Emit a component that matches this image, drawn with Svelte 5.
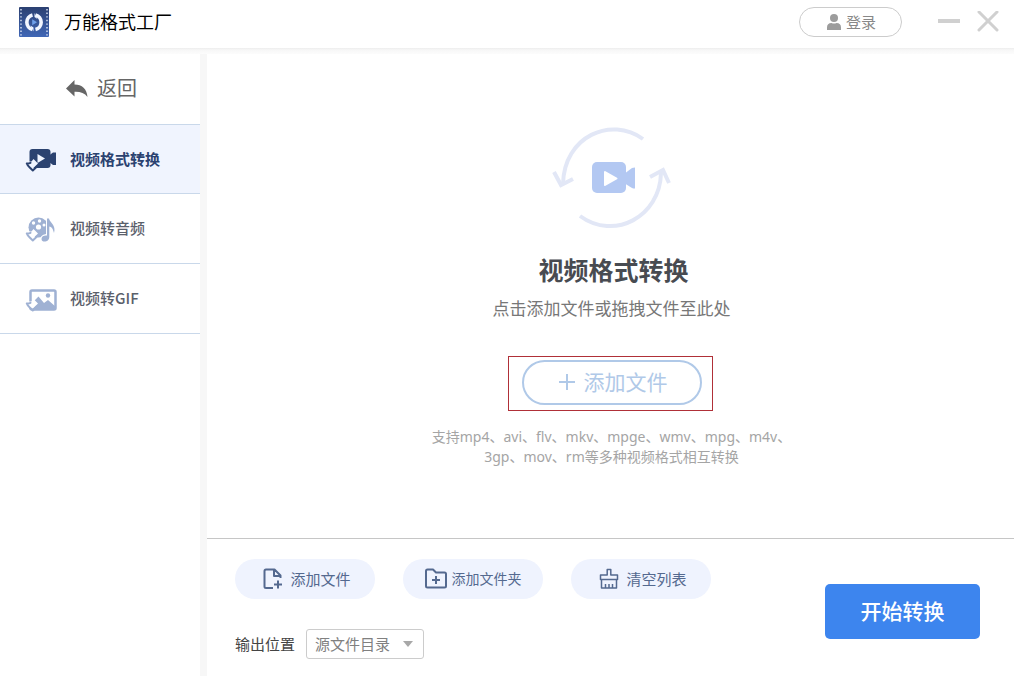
<script>
  const modes = [
    { id: 'convert', label: '视频格式转换' },
    { id: 'audio', label: '视频转音频' },
    { id: 'gif', label: '视频转GIF' }
  ];
  const actions = [
    { id: 'file', label: '添加文件' },
    { id: 'folder', label: '添加文件夹' },
    { id: 'clear', label: '清空列表' }
  ];
  let current = $state('convert');
  let output = $state('source');
</script>

<div class="app">
  <header>
    <svg class="logo" viewBox="0 0 30 30" aria-hidden="true">
      <defs>
        <linearGradient id="logo-fill" x1="0" y1="0" x2="0" y2="1">
          <stop offset="0" stop-color="#2b4071" />
          <stop offset="1" stop-color="#4067b6" />
        </linearGradient>
      </defs>
      <rect width="30" height="30" rx="1" fill="url(#logo-fill)" />
      <path d="M2 2V29M28 2V29" stroke="#dfe7f7" stroke-width="1.4" stroke-dasharray="1.4 2.2" />
      <path d="M13.500 7.900A7.600 7.600 0 0 0 13.500 22.600M16.500 22.600A7.600 7.600 0 0 0 16.500 7.900" fill="none" stroke="#f2f6ff" stroke-width="3.6" />
      <path d="M11.500 18.500L14.500 20.500V24.500ZM18.500 12L15.500 10V6Z" fill="#f2f6ff" />
      <path d="M13.200 12.200L18 15.200L13.200 18.200Z" fill="#6fa0ea" />
    </svg>
    <h1>万能格式工厂</h1>
    <button class="login">
      <svg viewBox="0 0 14 16" aria-hidden="true">
        <circle cx="7" cy="4" r="4" />
        <path d="M0 16V13.500Q0 9 4.500 9Q7 10.200 9.500 9Q14 9 14 13.500V16Z" />
      </svg>
      <span>登录</span>
    </button>
    <button class="window-control" aria-label="最小化">
      <svg viewBox="0 0 22 22"><path d="M0 10H22" stroke-width="4" /></svg>
    </button>
    <button class="window-control" aria-label="关闭">
      <svg viewBox="0 0 22 22"><path d="M2 1L20 19M20 1L2 19" stroke-width="3" stroke-linecap="round" /></svg>
    </button>
  </header>

  <div class="body">
    <aside>
      <button class="back">
        <svg viewBox="0 0 22 17" aria-hidden="true">
          <path d="M0 8.500L8.500 0V4.500C16 4.500 21 9 21.500 17C18.500 13 14 11.500 8.500 11.800V16.500Z" />
        </svg>
        <span>返回</span>
      </button>
      <nav>
        {#each modes as mode (mode.id)}
          <button class:active={current === mode.id} onclick={() => (current = mode.id)}>
            <svg viewBox="0 0 34 28" aria-hidden="true">
              {#if mode.id === 'convert'}
                <rect x="5.500" y="4" width="21" height="19" rx="3" />
                <path d="M25 10.500L29 7.500H32V20H29L25 17Z" />
                <path class="cut" d="M13.500 9L21 13.500L13.500 18Z" />
              {:else if mode.id === 'audio'}
                <circle cx="14.500" cy="12.500" r="10" />
                <circle class="cut" cx="14.500" cy="12" r="2.600" />
                <circle class="cut" cx="15.500" cy="6" r="1.700" />
                <circle class="cut" cx="9.500" cy="8" r="1.700" />
                <circle class="cut" cx="20" cy="10" r="1.500" />
                <path class="note" d="M23 3.500H25C25.500 7.500 32.500 10 30 18C29 13.500 27.500 12 25.300 11.500V22C25.300 27.500 17.500 28 17.500 24C17.500 21 20.500 20 23 20.500Z" />
              {:else}
                <rect x="6.500" y="5.500" width="25" height="19" rx="1.500" fill="none" stroke="currentColor" stroke-width="2.500" />
                <path d="M6 24V20L14.500 11.500L20 18L24 15L32 22V25H6Z" />
                <circle cx="24" cy="10.500" r="2.200" />
              {/if}
              <path class="cut" d="M1 16.500H7.500L9.500 14L14 18.500L8.800 23.500L2 21Z" />
              <path class="hook" d="M2.800 18.500Q4 21 5.500 22.300L8.800 25.400L13 21.600M2.800 18.500Q5 18.600 6.500 17.800" />
            </svg>
            <span>{mode.label}</span>
          </button>
        {/each}
      </nav>
    </aside>

    <main>
      <section class="drop">
        <svg class="hero" viewBox="0 0 124 108" aria-hidden="true">
          <g fill="none" stroke="#e2e7f6" stroke-width="4">
            <path d="M94 15C62 -8 15 12 14 60" />
            <path d="M5 48L12 61L24 55" />
            <path d="M31 92C65 117 111 93 112 49" />
            <path d="M101 53L114 46L120 59" />
          </g>
          <rect x="43" y="38" width="34" height="31" rx="5" fill="#b3c8f2" />
          <path d="M75 50L83 44Q84 43.500 86 43.500V64.500Q84 64.500 83 64L75 59Z" fill="#b3c8f2" />
          <path d="M56 48L67.500 54.500L56 61Z" fill="#fff" stroke="#fff" stroke-width="2" stroke-linejoin="round" />
        </svg>
        <h2>视频格式转换</h2>
        <p class="sub">点击添加文件或拖拽文件至此处</p>
        <div class="marked">
          <button class="add">
            <svg viewBox="0 0 16 16" aria-hidden="true"><path d="M8 0V16M0 8H16" /></svg>
            <span>添加文件</span>
          </button>
        </div>
        <p class="hint">支持mp4、avi、flv、mkv、mpge、wmv、mpg、m4v、<br />3gp、mov、rm等多种视频格式相互转换</p>
      </section>

      <footer>
        <div class="tools">
          <div class="pills">
            {#each actions as action (action.id)}
              <button class={action.id}>
                <svg viewBox="0 0 22 22" aria-hidden="true">
                  {#if action.id === 'file'}
                    <path d="M12 20H5Q3.500 20 3.500 18.500V3Q3.500 1.500 5 1.500H13.500L19.500 7.500V10M13 2V8H19M17 12.500V20.500M13 16.500H21" />
                  {:else if action.id === 'folder'}
                    <path d="M1 18V3Q1 1.500 2.500 1.500H8L11 4.500H19.500Q21 4.500 21 6V18Q21 19.500 19.500 19.500H2.500Q1 19.500 1 18ZM11 8V16M7 12H15" />
                  {:else}
                    <path class="thin" d="M10.200 7V1.500H13.800V7H20.500V11.500H3.500V7ZM4.500 11.500V20H19.500V11.500M8.500 16V20M12 16V20M15.500 16V20" />
                  {/if}
                </svg>
                <span>{action.label}</span>
              </button>
            {/each}
          </div>
          <div class="output">
            <label for="output">输出位置</label>
            <select id="output" bind:value={output}>
              <option value="source">源文件目录</option>
            </select>
          </div>
        </div>
        <button class="start"><span>开始转换</span></button>
      </footer>
    </main>
  </div>
</div>

<style>
  :global(body) {
    margin: 0;
  }
  .app {
    display: flex;
    flex-direction: column;
    min-height: 100vh;
    background: #fff;
    color: #444;
    font-family: 'Noto Sans CJK SC', sans-serif;
  }
  .app * {
    box-sizing: border-box;
  }
  button {
    display: flex;
    align-items: center;
    justify-content: center;
    padding: 0;
    border: 0;
    background: none;
    color: inherit;
    font: inherit;
    white-space: nowrap;
    cursor: pointer;
  }
  button span {
    padding-bottom: 2px;
  }
  h1, h2, p {
    margin: 0;
  }
  svg {
    flex: none;
    fill: currentColor;
  }

  header {
    display: flex;
    align-items: center;
    height: 54px;
    padding: 0 15px 10px 19px;
    background: linear-gradient(#fff 48px, #ededed 48px, #f7f7f7 50px, #fcfcfc 54px);
  }
  .logo {
    width: 30px;
    height: 30px;
  }
  h1 {
    flex: 1;
    margin-left: 15px;
    padding-bottom: 2px;
    color: #000;
    font-size: 18px;
    font-weight: 400;
    line-height: 24px;
  }
  .login {
    gap: 5px;
    width: 103px;
    height: 30px;
    margin-right: 36px;
    padding-left: 2px;
    border: 1px solid #ccc;
    border-radius: 15px;
    color: #888;
    font-size: 15px;
  }
  .login svg {
    width: 14px;
    height: 16px;
    fill: #9c9c9c;
  }
  .window-control + .window-control {
    margin-left: 17px;
  }
  .window-control svg {
    display: block;
    width: 22px;
    height: 22px;
    stroke: #d0d0d0;
  }

  .body {
    display: flex;
    flex: 1;
  }
  aside {
    flex: none;
    width: 207px;
    border-right: 7px solid #f7f7f7;
  }
  .back {
    gap: 9px;
    width: 100%;
    height: 70px;
    padding: 0 0 2px 3px;
    color: #666;
    font-size: 20px;
  }
  .back svg {
    width: 22px;
    height: 17px;
  }
  nav {
    border-top: 1px solid #c9d8ea;
  }
  nav button {
    --bg: #fff;
    justify-content: flex-start;
    gap: 12px;
    width: 100%;
    height: 70px;
    padding: 0 24px;
    border-bottom: 1px solid #c9d8ea;
    background: var(--bg);
    color: #5b606b;
    font-size: 15px;
    font-weight: 500;
  }
  nav button:first-child {
    height: 69px;
  }
  nav .active {
    --bg: #f0f4fe;
    color: #2b4270;
    font-weight: 700;
  }
  nav svg {
    width: 34px;
    height: 28px;
    color: #9fb1d3;
  }
  nav .active svg {
    color: #2b4270;
  }
  .cut {
    fill: var(--bg);
  }
  .note {
    stroke: var(--bg);
    stroke-width: 2;
    paint-order: stroke;
  }
  .hook {
    fill: none;
    stroke: currentColor;
    stroke-width: 2;
    stroke-linecap: round;
    stroke-linejoin: round;
  }

  main {
    display: flex;
    flex: 1;
    flex-direction: column;
    min-width: 0;
  }
  .drop {
    display: flex;
    flex: 1;
    flex-direction: column;
    align-items: center;
    justify-content: center;
    padding-bottom: 2px;
    text-align: center;
  }
  .hero {
    width: 124px;
    height: 108px;
  }
  h2 {
    margin-top: 19px;
    padding-left: 6px;
    color: #484b51;
    font-size: 25px;
    font-weight: 700;
    line-height: 36px;
  }
  .sub {
    margin-top: 9px;
    padding-left: 2px;
    color: #777;
    font-size: 17px;
    line-height: 24px;
  }
  .marked {
    margin-top: 36px;
    padding: 3px 10px 5px 13px;
    border: 1px solid #b03038;
  }
  .add {
    gap: 9px;
    width: 180px;
    height: 45px;
    padding-left: 2px;
    border: 2px solid #b0c9e8;
    border-radius: 23px;
    color: #b0c9e8;
    font-size: 21px;
  }
  .add svg {
    width: 16px;
    height: 16px;
    stroke: currentColor;
    stroke-width: 2;
  }
  .hint {
    margin-top: 16px;
    padding-left: 2px;
    color: #a5a5a5;
    font-family: 'Noto Sans', 'Noto Sans CJK SC', sans-serif;
    font-size: 14px;
    line-height: 20px;
  }

  footer {
    display: flex;
    align-items: center;
    justify-content: space-between;
    padding: 20px 34px 17px 28px;
    border-top: 1px solid #c6c6c6;
  }
  .pills {
    display: flex;
    gap: 28px;
  }
  .pills button {
    gap: 7px;
    width: 140px;
    height: 40px;
    padding-left: 2px;
    border-radius: 20px;
    background: #eff3fe;
    color: #54698f;
    font-size: 15px;
  }
  .pills .folder {
    gap: 5px;
    padding-left: 0;
    font-size: 14px;
  }
  .pills svg {
    width: 22px;
    height: 22px;
    fill: none;
    stroke: currentColor;
    stroke-width: 2;
    stroke-linejoin: round;
  }
  .pills .thin {
    stroke-width: 1.5;
  }
  .output {
    display: flex;
    align-items: center;
    gap: 11px;
    margin-top: 30px;
    font-size: 15px;
  }
  label {
    padding-bottom: 2px;
  }
  select {
    width: 118px;
    height: 30px;
    padding: 0 8px 2px;
    border: 1px solid #ccc;
    border-radius: 3px;
    appearance: none;
    background: #fff url("data:image/svg+xml,%3Csvg xmlns='http://www.w3.org/2000/svg' width='10' height='6'%3E%3Cpath d='M0 0H10L5 6Z' fill='%23a8a8a8'/%3E%3C/svg%3E") no-repeat right 10px center;
    color: #808080;
    font: inherit;
  }
  .start {
    width: 155px;
    height: 55px;
    margin-top: 4px;
    border-radius: 5px;
    background: #3d85ee;
    color: #fff;
    font-size: 21px;
    font-weight: 500;
  }
</style>
